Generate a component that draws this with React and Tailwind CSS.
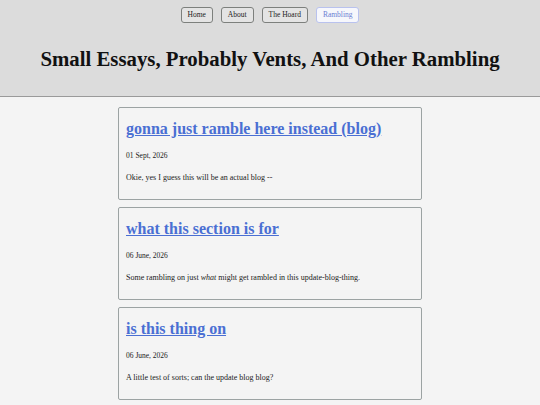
import React from 'react';

const navItems = ['Home', 'About', 'The Hoard', 'Rambling'];

const posts = [
  { title: 'gonna just ramble here instead (blog)', date: '01 Sept, 2026', body: <>Okie, yes I guess this will be an actual blog --</> },
  { title: 'what this section is for', date: '06 June, 2026', body: <>Some rambling on just <em>what</em> might get rambled in this update-blog-thing.</> },
  { title: 'is this thing on', date: '06 June, 2026', body: <>A little test of sorts; can the update blog blog?</> },
];

export default function App() {
  return (
    <div className="min-h-screen bg-[#f4f4f4] font-['Liberation_Serif',serif] text-[#222]">
      <header className="bg-[#dcdcdc] border-b border-[#9a9a9a] h-[97px]">
        <nav className="flex justify-center gap-[8px] pt-[7px]">
          {navItems.map((n) => (
            <a key={n} href="#"
              className={n === 'Rambling'
                ? 'h-4 px-[6px] flex items-center text-[7.5px] rounded-[3px] border border-[#b9c2ee] bg-[#f6f7fc] text-[#6b80d2]'
                : 'h-4 px-[6px] flex items-center text-[7.5px] rounded-[3px] border border-[#7d807d] bg-[#e4e4e4] text-[#222]'}>
              {n}
            </a>
          ))}
        </nav>
        <h1 className="text-center font-bold text-[20.8px] leading-[24px] mt-[24px] text-[#111]">
          Small Essays, Probably Vents, And Other Rambling
        </h1>
      </header>
      <main className="flex flex-col items-center gap-[7px] pt-[10px]">
        {posts.map((p) => (
          <article key={p.title} className="w-[304px] h-[93px] border border-[#9ca3a3] rounded-[2px] px-[7px] pt-[11px]">
            <a href="#" className="block text-[16px] leading-[20px] font-bold underline text-[#4a6fd3]">{p.title}</a>
            <div className="text-[7.5px] leading-[10px] mt-[12px]">{p.date}</div>
            <p className="text-[8px] leading-[10px] mt-[12px]">{p.body}</p>
          </article>
        ))}
      </main>
    </div>
  );
}
